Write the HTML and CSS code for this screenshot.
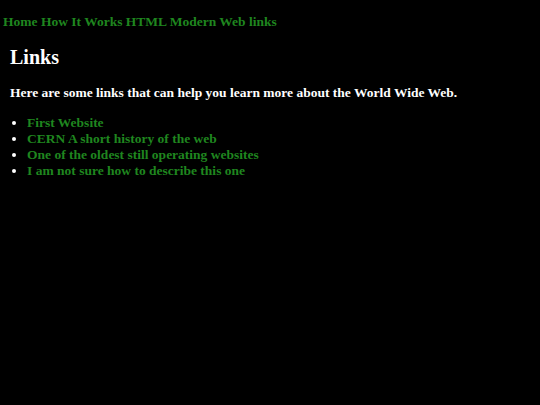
FILE: index.html
```html
<!DOCTYPE html>
<html>
<head>
<meta charset="utf-8">
<link rel="stylesheet" href="styles.css">
</head>
<body>
<nav class="nav">
<a href="#">Home</a>
<a href="#">How It Works</a>
<a href="#">HTML</a>
<a href="#">Modern Web</a>
<a href="#">links</a>
</nav>
<main class="content">
<h1 class="title">Links</h1>
<h3 class="intro">Here are some links that can help you learn more about the World Wide Web.</h3>
<ul class="links">
<li><a href="#">First Website</a></li>
<li><a href="#">CERN A short history of the web</a></li>
<li><a href="#">One of the oldest still operating websites</a></li>
<li><a href="#">I am not sure how to describe this one</a></li>
</ul>
</main>
</body>
</html>
```
FILE: styles.css
```css
html, body {
  background: #000;
}
body {
  margin: 0;
  font-family: "Liberation Serif", "Times New Roman", serif;
  color: #fff;
}
a {
  color: #1f861f;
  text-decoration: none;
  font-weight: bold;
}
.nav {
  padding: 14px 3px 0;
  font-size: 13.5px;
  font-weight: bold;
}
.content {
  padding: 0 10px;
}
.title {
  font-size: 20px;
  margin: 16px 0 0;
}
.intro {
  font-size: 13.5px;
  margin: 16px 0 0;
}
.links {
  margin: 14px 0 0;
  padding-left: 17px;
  font-size: 13.5px;
  line-height: 16px;
  color: #fff;
}
```
